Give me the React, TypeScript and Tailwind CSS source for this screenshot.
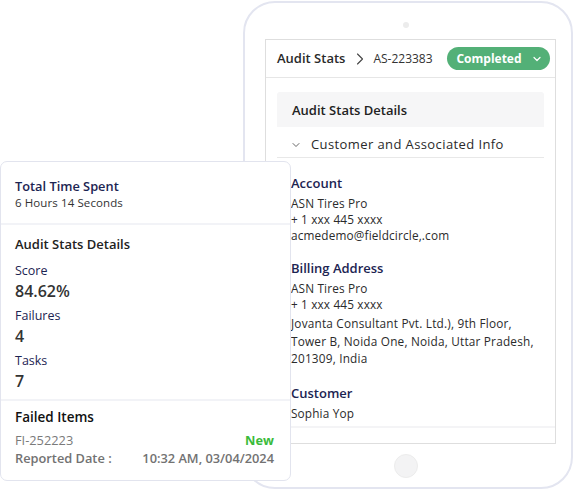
import React from 'react'
import { ChevronDown, ChevronRight } from 'lucide-react'

const font = { fontFamily: '"Open Sans", "Noto Sans", sans-serif' }

const InfoBlock: React.FC<{ title: string; lines: string[]; address?: string[] }> = ({ title, lines, address }) => (
  <div>
    <h4 className="text-[13px] font-semibold leading-[18px] text-[#1c2452]">{title}</h4>
    <div className="mt-[3px] text-[11.8px] leading-[16px] tracking-[0.15px] text-[#2b2b2b]">
      {lines.map((l) => (
        <p key={l}>{l}</p>
      ))}
    </div>
    {address && (
      <div className="mt-[3px] text-[11.8px] leading-[17.5px] tracking-[0.2px] text-[#2b2b2b]">
        {address.map((l) => (
          <p key={l}>{l}</p>
        ))}
      </div>
    )}
  </div>
)

const Tablet: React.FC = () => (
  <div className="ml-[243px] mt-[1px] flex h-[488px] w-[330px] flex-col rounded-[32px] border-2 border-[#e3e5f0] bg-white">
    {/* camera */}
    <div className="mt-[19px] flex justify-center pr-[4px]">
      <div className="h-[6px] w-[6px] rounded-full bg-[#ececec]" />
    </div>

    {/* screen */}
    <div className="ml-[20px] mt-[11px] h-[405px] w-[291px] border border-[#dedede]">
      {/* header */}
      <div className="flex h-[38px] items-center border-b border-[#e6e6e6] pl-[11px] pr-[5px]">
        <span className="text-[13px] font-semibold text-[#2a2a2a]">Audit Stats</span>
        <ChevronRight size={20} strokeWidth={1.3} className="ml-[5px] text-[#444]" />
        <span className="ml-[3px] text-[12px] font-medium text-[#333]">AS-223383</span>
        <div className="ml-auto flex h-[23px] w-[103px] items-center justify-center gap-[9px] rounded-full bg-[#53b077] pl-[2px]">
          <span className="text-[12px] font-bold text-white">Completed</span>
          <ChevronDown size={12} strokeWidth={2.4} className="text-white" />
        </div>
      </div>

      <div className="px-[11px] pt-[14px]">
        <div className="flex h-[35px] items-center rounded-t-[3px] bg-[#f6f6f7] pl-[15px] pt-[2px]">
          <span className="text-[13px] font-semibold text-[#222]">Audit Stats Details</span>
        </div>
        <div className="flex h-[31px] items-center border-b border-[#e8e8e8] pl-[13px] pt-[6px]">
          <ChevronDown size={12} strokeWidth={1.8} className="text-[#555]" />
          <span className="ml-[9px] text-[13px] font-medium tracking-[0.4px] text-[#2a2a2a]">
            Customer and Associated Info
          </span>
        </div>

        <div className="flex flex-col gap-[16px] pl-[14px] pt-[16px]">
          <InfoBlock title="Account" lines={['ASN Tires Pro', '+ 1 xxx 445 xxxx', 'acmedemo@fieldcircle,.com']} />
          <InfoBlock
            title="Billing Address"
            lines={['ASN Tires Pro', '+ 1 xxx 445 xxxx']}
            address={['Jovanta Consultant Pvt. Ltd.), 9th Floor,', 'Tower B, Noida One, Noida, Uttar Pradesh,', '201309, India']}
          />
          <InfoBlock title="Customer" lines={['Sophia Yop']} />
        </div>
      </div>
      <div className="mt-[5px] h-[2px] bg-[#f4f4f6]" />
    </div>

    {/* home button */}
    <div className="mt-[10px] flex justify-center pr-[4px]">
      <div className="h-[24px] w-[24px] rounded-full border border-[#ececec] bg-[#f3f3f4]" />
    </div>
  </div>
)

const StatItem: React.FC<{ label: string; value: string; first?: boolean }> = ({ label, value, first }) => (
  <div className={first ? 'mt-[9px]' : 'mt-[5px]'}>
    <p className="text-[12.5px] font-medium leading-[18px] text-[#1c2452]">{label}</p>
    <p className="text-[16px] font-semibold leading-[22px] text-[#333]">{value}</p>
  </div>
)

const StatsCard: React.FC = () => (
  <div className="absolute left-0 top-[161px] w-[291px] rounded-[7px] border border-[#e2e4ee] bg-white">
    <div className="px-[14px] pb-[12px] pt-[15px]">
      <p className="text-[12.8px] font-semibold leading-[18px] text-[#1c2452]">Total Time Spent</p>
      <p className="text-[11.5px] leading-[16px] tracking-[0.1px] text-[#333]">6 Hours 14 Seconds</p>
    </div>
    <div className="h-[2px] bg-[#f2f3f7]" />
    <div className="px-[14px] pb-[7px] pt-[10px]">
      <p className="text-[13px] font-semibold leading-[18px] text-[#222]">Audit Stats Details</p>
      <StatItem label="Score" value="84.62%" first />
      <StatItem label="Failures" value="4" />
      <StatItem label="Tasks" value="7" />
    </div>
    <div className="h-[2px] bg-[#f2f3f7]" />
    <div className="pb-[13px] pl-[14px] pr-[16px] pt-[7px]">
      <p className="text-[13.5px] font-semibold leading-[18px] text-[#111]">Failed Items</p>
      <div className="mt-[5px] flex justify-between text-[12.8px] leading-[18px]">
        <span className="font-medium text-[#7a7a7a]">FI-252223</span>
        <span className="font-bold text-[#3bbb3b]">New</span>
      </div>
      <div className="flex justify-between text-[12.8px] font-semibold leading-[18px] text-[#727272]">
        <span>Reported Date :</span>
        <span>10:32 AM, 03/04/2024</span>
      </div>
    </div>
  </div>
)

export default function App() {
  return (
    <div className="relative h-[491px] w-[575px] overflow-hidden bg-white" style={font}>
      <Tablet />
      <StatsCard />
    </div>
  )
}
